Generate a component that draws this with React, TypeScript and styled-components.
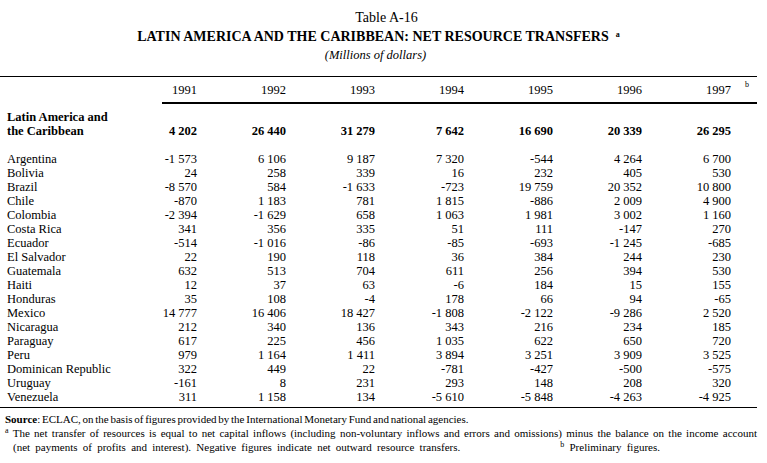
import styled, { createGlobalStyle } from "styled-components";

const GlobalStyle = createGlobalStyle`
  html, body {
    margin: 0;
    padding: 0;
    background: #ffffff;
    color: #000000;
    font-family: "Liberation Serif", "Times New Roman", serif;
  }
`;

const Page = styled.div`
  width: 757px;
  padding-top: 10px;
`;

const Caption = styled.header`
  display: flex;
  flex-direction: column;
  align-items: center;
`;

const TableNo = styled.div`
  font-size: 14px;
  line-height: 16px;
  padding-left: 16px;
`;

const Title = styled.h1`
  margin: 3px 0 0;
  font-size: 14px;
  line-height: 16px;
  font-weight: bold;
`;

const Units = styled.div`
  margin-top: 2px;
  padding-right: 6px;
  font-size: 12.5px;
  line-height: 16px;
  font-style: italic;
`;

const Sup = styled.sup<{ $gap?: number }>`
  font-size: 8px;
  line-height: 0;
  vertical-align: 0;
  position: relative;
  top: -0.55em;
  margin-left: ${(p) => p.$gap ?? 3}px;
`;

const Rule = styled.hr<{ $top: number; $thick?: boolean; $indent?: number }>`
  margin: ${(p) => p.$top}px 0 0 ${(p) => p.$indent ?? 0}px;
  border: 0;
  height: ${(p) => (p.$thick ? 2 : 1)}px;
  background: #000000;
`;

const Row = styled.div<{ $top?: number; $bold?: boolean }>`
  display: grid;
  grid-template-columns: 108px repeat(7, 89px);
  padding-right: 26px;
  margin-top: ${(p) => p.$top ?? 0}px;
  font-size: 12.5px;
  line-height: 14px;
  font-weight: ${(p) => (p.$bold ? "bold" : "normal")};
`;

const Label = styled.div`
  padding-left: 7px;
  white-space: nowrap;
`;

const Cell = styled.div`
  position: relative;
  align-self: end;
  text-align: right;
  white-space: nowrap;
`;

const HangingNote = styled.span`
  position: absolute;
  left: 100%;
  top: -2px;
  margin-left: 14px;
  font-size: 8px;
  line-height: 8px;
`;

const Body = styled.div`
  margin-top: 14px;
`;

const Notes = styled.footer`
  margin-top: 4px;
  padding-left: 5px;
  font-size: 11px;
  line-height: 14px;
`;

const NoteLine = styled.div<{ $indent?: number; $spacing?: number; $justify?: boolean }>`
  padding-left: ${(p) => p.$indent ?? 0}px;
  word-spacing: ${(p) => p.$spacing ?? 0}px;
  white-space: ${(p) => (p.$justify ? "normal" : "nowrap")};
  text-align: ${(p) => (p.$justify ? "justify" : "left")};
  text-align-last: ${(p) => (p.$justify ? "justify" : "auto")};
`;

const Gap = styled.span`
  display: inline-block;
  width: 100px;
`;

const years = ["1991", "1992", "1993", "1994", "1995", "1996", "1997"];

const total = ["4 202", "26 440", "31 279", "7 642", "16 690", "20 339", "26 295"];

const countries: [string, string[]][] = [
  ["Argentina", ["-1 573", "6 106", "9 187", "7 320", "-544", "4 264", "6 700"]],
  ["Bolivia", ["24", "258", "339", "16", "232", "405", "530"]],
  ["Brazil", ["-8 570", "584", "-1 633", "-723", "19 759", "20 352", "10 800"]],
  ["Chile", ["-870", "1 183", "781", "1 815", "-886", "2 009", "4 900"]],
  ["Colombia", ["-2 394", "-1 629", "658", "1 063", "1 981", "3 002", "1 160"]],
  ["Costa Rica", ["341", "356", "335", "51", "111", "-147", "270"]],
  ["Ecuador", ["-514", "-1 016", "-86", "-85", "-693", "-1 245", "-685"]],
  ["El Salvador", ["22", "190", "118", "36", "384", "244", "230"]],
  ["Guatemala", ["632", "513", "704", "611", "256", "394", "530"]],
  ["Haiti", ["12", "37", "63", "-6", "184", "15", "155"]],
  ["Honduras", ["35", "108", "-4", "178", "66", "94", "-65"]],
  ["Mexico", ["14 777", "16 406", "18 427", "-1 808", "-2 122", "-9 286", "2 520"]],
  ["Nicaragua", ["212", "340", "136", "343", "216", "234", "185"]],
  ["Paraguay", ["617", "225", "456", "1 035", "622", "650", "720"]],
  ["Peru", ["979", "1 164", "1 411", "3 894", "3 251", "3 909", "3 525"]],
  ["Dominican Republic", ["322", "449", "22", "-781", "-427", "-500", "-575"]],
  ["Uruguay", ["-161", "8", "231", "293", "148", "208", "320"]],
  ["Venezuela", ["311", "1 158", "134", "-5 610", "-5 848", "-4 263", "-4 925"]],
];

const App = () => {
  return (
    <Page>
      <GlobalStyle />
      <Caption>
        <TableNo>Table A-16</TableNo>
        <Title>
          LATIN AMERICA AND THE CARIBBEAN: NET RESOURCE TRANSFERS<Sup $gap={7}>a</Sup>
        </Title>
        <Units>(Millions of dollars)</Units>
      </Caption>

      <Rule $top={13} />
      <Row $top={6}>
        <Label />
        {years.map((y, i) => (
          <Cell key={y}>
            {y}
            {i === years.length - 1 && <HangingNote>b</HangingNote>}
          </Cell>
        ))}
      </Row>
      <Rule $top={5} $thick $indent={162} />

      <Row $top={6} $bold>
        <Label>
          Latin America and
          <br />
          the Caribbean
        </Label>
        {total.map((v, i) => (
          <Cell key={i}>{v}</Cell>
        ))}
      </Row>

      <Body>
        {countries.map(([name, values]) => (
          <Row key={name}>
            <Label>{name}</Label>
            {values.map((v, i) => (
              <Cell key={i}>{v}</Cell>
            ))}
          </Row>
        ))}
      </Body>
      <Rule $top={3} />

      <Notes>
        <NoteLine $spacing={-1}>
          <b>Source</b>: ECLAC, on the basis of figures provided by the International Monetary Fund and national agencies.
        </NoteLine>
        <NoteLine $justify>
          <Sup $gap={0}>a</Sup> The net transfer of resources is equal to net capital inflows (including non-voluntary
          inflows and errors and omissions) minus the balance on the income account
        </NoteLine>
        <NoteLine $indent={8} $spacing={2.5}>
          (net payments of profits and interest). Negative figures indicate net outward resource transfers.
          <Gap />
          <Sup $gap={0}>b</Sup> Preliminary figures.
        </NoteLine>
      </Notes>
    </Page>
  );
};

export default App;
